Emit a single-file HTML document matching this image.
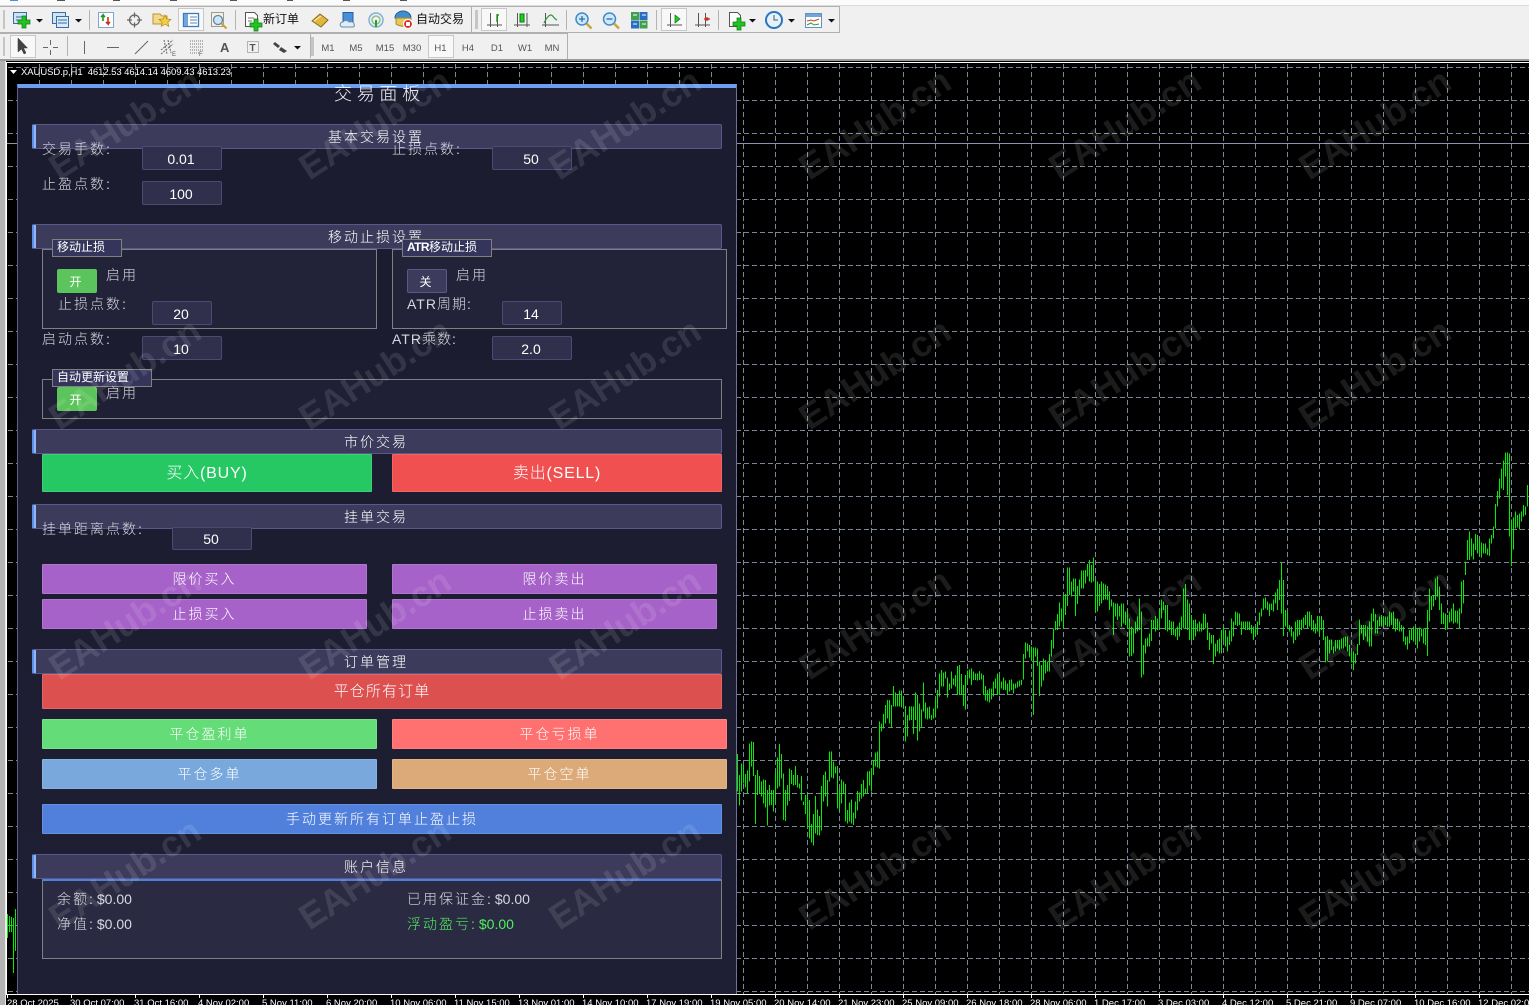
<!DOCTYPE html>
<html lang="zh-CN">
<head>
<meta charset="utf-8">
<title>MT4 交易面板</title>
<style>
html,body{margin:0;padding:0;background:#000}
body{position:relative;width:1529px;height:1005px;overflow:hidden;font-family:"Liberation Sans","Noto Sans CJK SC",sans-serif}
svg{position:absolute;left:0;top:0}
.a{position:absolute;box-sizing:border-box;white-space:nowrap}
#panel{left:17px;top:84px;width:720px;height:910px;background:linear-gradient(#1c1c30,#1e1e34);border-left:1px solid #5f6088;border-right:1px solid #6f70a0;border-top:4px solid #6d9ff0;overflow:visible}
.s{height:25px;left:32px;width:690px;background:#3d3b5c;border:1px solid #5a5888;border-left:2px solid #5b8fe8;box-shadow:inset 2px 0 #8fb5f5;border-radius:2px;color:#fff;font-size:14px;font-weight:300;letter-spacing:2px;text-align:center;line-height:24px;padding-right:3px}
.l{height:20px;line-height:21px;font-size:14px;font-weight:300;letter-spacing:2px;color:#d8d8e0}
.l span{letter-spacing:0;margin-left:2px}
.i{width:80px;height:24px;background:#302f4c;border:1px solid #4b4a72;border-radius:2px;color:#fff;font-size:14px;text-align:center;line-height:24px;padding-right:2px}
.g{border:1px solid #808080;background:#222238}
.c{height:18px;background:#35345a;border:1px solid #808080;color:#fff;font-size:12px;line-height:15px;padding-left:4px}
.c b{letter-spacing:-.6px}
.t{width:40px;height:24px;border-radius:2px;color:#fff;font-size:12px;text-align:center;line-height:27px;background:#5cc45c;padding-right:3px}
.b{color:#fff;font-size:14px;font-weight:300;letter-spacing:2px;text-align:center;border:1px solid rgba(255,255,255,.12);border-radius:1px}
.w{position:absolute;font:bold 36px "Liberation Sans",sans-serif;color:rgba(255,255,255,.11);transform:translate(-50%,-50%) rotate(-33deg);white-space:nowrap;pointer-events:none}
</style>
</head>
<body>
<!-- chart -->
<svg width="1529" height="1005" viewBox="0 0 1529 1005">
<rect x="0" y="0" width="1529" height="1005" fill="#000"/>
<g stroke="#7a8899" stroke-width="1" stroke-dasharray="5 3" shape-rendering="crispEdges" fill="none">
<path d="M8 67.5H1529M8 100.5H1529M8 133.5H1529M8 166.5H1529M8 199.5H1529M8 232.5H1529M8 265.5H1529M8 298.5H1529M8 331.5H1529M8 364.5H1529M8 397.5H1529M8 430.5H1529M8 463.5H1529M8 496.5H1529M8 529.5H1529M8 562.5H1529M8 595.5H1529M8 628.5H1529M8 661.5H1529M8 694.5H1529M8 727.5H1529M8 760.5H1529M8 793.5H1529M8 826.5H1529M8 859.5H1529M8 892.5H1529M8 925.5H1529M8 958.5H1529M8 991.5H1529"/>
<path d="M39.5 64V994M71.5 64V994M103.5 64V994M135.5 64V994M167.5 64V994M199.5 64V994M231.5 64V994M263.5 64V994M295.5 64V994M327.5 64V994M359.5 64V994M391.5 64V994M423.5 64V994M455.5 64V994M487.5 64V994M519.5 64V994M551.5 64V994M583.5 64V994M615.5 64V994M647.5 64V994M679.5 64V994M711.5 64V994M743.5 64V994M775.5 64V994M807.5 64V994M839.5 64V994M871.5 64V994M903.5 64V994M935.5 64V994M967.5 64V994M999.5 64V994M1031.5 64V994M1063.5 64V994M1095.5 64V994M1127.5 64V994M1159.5 64V994M1191.5 64V994M1223.5 64V994M1255.5 64V994M1287.5 64V994M1319.5 64V994M1351.5 64V994M1383.5 64V994M1415.5 64V994M1447.5 64V994M1479.5 64V994M1511.5 64V994"/>
</g>
<path d="M7 143.5H1529" stroke="#8a93a8" stroke-width="1" shape-rendering="crispEdges"/>
<g fill="none" stroke="#00ee00" stroke-width="3" shape-rendering="crispEdges" transform="translate(735.17 640) scale(.33333)">
<path d="M7 342V455M13 405V497M19 370V455M25 375V430M31 402V442M37 392V460M43 310V425M49 305V380M55 306V408M61 405V552M67 390V465M73 408V462M79 425V470M85 418V490M91 420V503M97 450V557M103 435V497M109 450V495M115 450V515M121 398V490M127 352V445M133 312V440M139 342V415M145 400V540M151 450V543M157 435V497M163 385V483M169 390V432M175 405V437M181 378V435M187 405V442M193 430V445M199 408V482M205 485V495M211 465V522M217 460V560M223 480V595M229 552V608M235 522V617M241 468V580M247 508V585M253 528V587M259 438V572M265 405V485M271 395V470M277 420V500M283 335V425M289 335V412M295 365V415M301 380V400M307 378V505M313 447V510M319 418V490M325 425V462M331 432V545M337 510V550M343 488V545M349 478V550M355 518V555M361 485V535M367 453V512M373 458V485M379 432V475M385 420V470M391 445V462M397 395V460M403 393V436M409 385V455M415 360V405M421 338V380M427 335V382M433 245V385M439 250V275M445 222V265M451 195V250M457 180V235M463 180V250M469 195V262M475 138V200M481 158V200M487 165V200M493 152V200M499 152V202M505 170V200M511 198V305M517 225V290M523 200V242M529 200V240M535 200V282M541 157V240M547 165V302M553 190V275M559 208V262M565 127V215M571 188V235M577 202V238M583 200V235M589 225V240M595 205V235M601 177V232M607 150V205M613 100V170M619 90V140M625 98V140M631 95V115M637 112V172M643 130V150M649 95V145M655 115V135M661 105V140M667 78V165M673 75V165M679 102V165M685 135V198M691 105V208M697 92V135M703 88V115M709 85V135M715 95V120M721 100V120M727 100V122M733 93V120M739 100V118M745 105V165M751 138V182M757 150V185M763 145V188M769 145V178M775 125V170M781 115V145M787 100V165M793 102V165M799 125V145M805 113V150M811 122V150M817 130V165M823 120V155M829 118V150M835 130V160M841 130V145M847 125V143M853 122V140M859 120V135M865 42V118M871 7V55M877 10V35M883 15V52M889 20V62M895 22V225M901 22V50M907 25V78M913 65V168M919 75V140M925 55V122M931 60V100M937 65V95M943 42V95M949 0V50"/>
</g>
<g fill="none" stroke="#00ee00" stroke-width="3" shape-rendering="crispEdges" transform="translate(1000.5 440) scale(.33333)">
<path d="M159 565V625M165 543V570M171 522V570M177 488V560M183 505V545M189 465V565M195 462V525M201 382V498M207 382V465M213 425V470M219 415V455M225 415V528M231 438V492M237 418V468M243 392V445"/>
</g>
<g fill="none" stroke="#00ee00" stroke-width="3" shape-rendering="crispEdges" transform="translate(1002.5 440) scale(.33333)">
<path d="M243 392V445M249 390V430M255 372V410M261 360V425M267 375V428M273 352V425M279 418V515M285 425V515M291 432V498M297 425V490M303 430V480M309 433V478M315 438V480M321 455V510M327 478V500M333 488V585M339 490V530M345 490V540M351 498V530M357 490V560M363 490V550M369 515V555M375 510V565M381 535V650M387 560V648M393 565V640M399 545V580M405 530V575M411 475V570M417 515V712M423 615V703M429 595V640M435 592V620M441 580V620M447 540V603M453 540V565M459 528V575M465 535V570M471 508V570M477 478V535M483 485V510M489 495V570M495 495V575M501 540V570M507 545V585M513 545V585M519 565V590M525 560V600M531 548V590M537 530V570M543 445V565M549 432V565M555 478V570M561 490V600M567 525V600M573 540V600M579 538V590M585 550V575M591 545V575M597 550V575M603 520V570M609 522V565M615 548V600M621 578V630M627 585V610M633 585V672M639 610V650M645 600V635M651 595V640M657 570V640M663 560V600M669 570V620M675 590V635M681 572V615M687 535V605M693 545V590M699 515V555M705 518V558M711 520V555M717 545V585M723 545V565M729 545V570M735 545V570"/>
</g>
<g fill="none" stroke="#00ee00" stroke-width="3" shape-rendering="crispEdges" transform="translate(1004.5 440) scale(.33333)">
<path d="M735 545V570M741 555V580M747 560V600M753 560V590M759 545V585M765 518V555M771 505V530M777 475V510M783 472V505M789 485V510M795 490V528M801 490V510M807 478V515M813 458V490M819 445V510M825 420V480M831 368V520M837 420V588M843 510V560M849 512V565M855 555V575M861 560V590M867 575V610M873 545V600M879 540V590M885 540V585M891 538V570M897 532V565M903 525V555M909 515V565M915 515V560M921 525V570M927 540V575M933 550V580M939 528V575M945 530V585M951 528V570M957 540V600M963 590V668M969 588V665M975 600V640M981 598V630M987 620V640M993 600V635M999 600V625M1005 600V630M1011 595V625M1017 592V625M1023 590V620M1029 590V635M1035 615V650M1041 635V668M1047 635V690M1053 640V670M1059 612V645M1065 538V615M1071 555V580M1077 555V600M1083 555V590M1089 560V605M1095 545V620M1101 520V620M1107 505V545M1113 522V580M1119 540V580M1125 530V560M1131 525V560M1137 530V560M1143 530V555M1149 530V560M1155 515V560M1161 518V555M1167 515V565M1173 535V575M1179 535V570M1185 545V575M1191 555V575M1197 560V605M1203 590V615M1209 590V628M1215 570V610M1221 565V600M1227 560V605"/>
</g>
<g fill="none" stroke="#00ee00" stroke-width="3" shape-rendering="crispEdges" transform="translate(1006.5 440) scale(.33333)">
<path d="M1227 560V605M1233 565V625M1239 562V605M1245 565V590M1251 565V610M1257 565V615M1263 510V648M1269 445V545M1275 468V510M1281 465V500M1287 415V480M1293 410V470M1299 440V510M1305 490V552M1311 518V552M1317 520V570M1323 525V568M1329 515V548M1335 505V545M1341 490V550M1347 512V548M1353 512V550M1359 505V565M1365 425V520M1371 420V490M1377 365V405M1383 300V360M1389 275V360M1395 295V350M1401 310V358M1407 282V330M1413 285V340M1419 295V340M1425 308V352M1431 310V340M1437 310V340M1443 325V345M1449 295V348M1455 285V310M1461 260V295M1467 192V265M1473 153V200M1479 115V175M1485 85V145M1491 62V150M1497 38V110M1503 38V165M1509 40V290M1515 238V378M1521 232V328M1527 215V265M1533 225V262M1539 220V268M1545 215V245M1551 195V230M1557 200V225M1563 135V200"/>
</g>
<path d="M7.5 914V938M9.5 916V932M11.5 917V932M13.5 918V973M15.5 909V951" stroke="#00ee00" stroke-width="1" shape-rendering="crispEdges"/>
<!-- axis frame -->
<path d="M6.5 63V994M6 994.5H1529M6 62.5H1529" stroke="#fff" stroke-width="1" shape-rendering="crispEdges"/>
<path d="M7.5 995v3M71.5 995v3M135.5 995v3M199.5 995v3M263.5 995v3M327.5 995v3M391.5 995v3M455.5 995v3M519.5 995v3M583.5 995v3M647.5 995v3M711.5 995v3M775.5 995v3M839.5 995v3M903.5 995v3M967.5 995v3M1031.5 995v3M1095.5 995v3M1159.5 995v3M1223.5 995v3M1287.5 995v3M1351.5 995v3M1415.5 995v3M1479.5 995v3" stroke="#fff" shape-rendering="crispEdges"/>
<g fill="#fff" font-family="Liberation Sans" font-size="9.5">
<text x="7" y="1006">28 Oct 2025</text><text x="70" y="1006">30 Oct 07:00</text><text x="134" y="1006">31 Oct 16:00</text><text x="198" y="1006">4 Nov 02:00</text><text x="262" y="1006">5 Nov 11:00</text><text x="326" y="1006">6 Nov 20:00</text><text x="390" y="1006">10 Nov 06:00</text><text x="454" y="1006">11 Nov 15:00</text><text x="518" y="1006">13 Nov 01:00</text><text x="582" y="1006">14 Nov 10:00</text><text x="646" y="1006">17 Nov 19:00</text><text x="710" y="1006">19 Nov 05:00</text><text x="774" y="1006">20 Nov 14:00</text><text x="838" y="1006">21 Nov 23:00</text><text x="902" y="1006">25 Nov 09:00</text><text x="966" y="1006">26 Nov 18:00</text><text x="1030" y="1006">28 Nov 06:00</text><text x="1094" y="1006">1 Dec 17:00</text><text x="1158" y="1006">3 Dec 03:00</text><text x="1222" y="1006">4 Dec 12:00</text><text x="1286" y="1006">5 Dec 21:00</text><text x="1350" y="1006">9 Dec 07:00</text><text x="1414" y="1006">10 Dec 16:00</text><text x="1478" y="1006">12 Dec 02:00</text>
</g>
<path d="M10 70h7l-3.5 4z" fill="#fff"/>
<text x="21" y="75" fill="#fff" font-family="Liberation Sans" font-size="9.5" textLength="210" lengthAdjust="spacing" xml:space="preserve">XAUUSD.p,H1  4612.53 4614.14 4609.43 4613.23</text>
</svg>

<!-- panel -->
<div class="a" id="panel"></div>
<div class="a" style="left:334px;top:83px;height:22px;line-height:22px;font-size:18px;font-weight:300;letter-spacing:4.7px;color:#f4f4fa">交易面板</div>

<div class="a s" style="top:124px">基本交易设置</div>
<div class="a l" style="left:42px;top:139px">交易手数:</div>
<div class="a i" style="left:142px;top:146px">0.01</div>
<div class="a l" style="left:392px;top:139px">止损点数:</div>
<div class="a i" style="left:492px;top:146px">50</div>
<div class="a l" style="left:42px;top:174px">止盈点数:</div>
<div class="a i" style="left:142px;top:181px">100</div>

<div class="a s" style="top:224px">移动止损设置</div>
<div class="a g" style="left:42px;top:249px;width:335px;height:80px"></div>
<div class="a c" style="left:52px;top:239px;width:70px">移动止损</div>
<div class="a t" style="left:57px;top:269px">开</div>
<div class="a l" style="left:106px;top:265px">启用</div>
<div class="a l" style="left:58px;top:294px">止损点数:</div>
<div class="a i" style="left:152px;top:301px;width:60px">20</div>

<div class="a g" style="left:392px;top:249px;width:335px;height:80px"></div>
<div class="a c" style="left:402px;top:239px;width:90px"><b>ATR</b>移动止损</div>
<div class="a t" style="left:407px;top:269px;background:#3d3b5c;border:1px solid #5a5888;line-height:25px">关</div>
<div class="a l" style="left:456px;top:265px">启用</div>
<div class="a l" style="left:407px;top:294px;letter-spacing:1px">ATR周期:</div>
<div class="a i" style="left:502px;top:301px;width:60px">14</div>

<div class="a l" style="left:42px;top:329px">启动点数:</div>
<div class="a i" style="left:142px;top:336px">10</div>
<div class="a l" style="left:392px;top:329px;letter-spacing:1px">ATR乘数:</div>
<div class="a i" style="left:492px;top:336px">2.0</div>

<div class="a g" style="left:42px;top:379px;width:680px;height:40px;background:#1f1f35"></div>
<div class="a c" style="left:52px;top:369px;width:100px">自动更新设置</div>
<div class="a t" style="left:57px;top:387px">开</div>
<div class="a l" style="left:106px;top:383px">启用</div>

<div class="a s" style="top:429px">市价交易</div>
<div class="a b" style="left:42px;top:454px;width:330px;height:38px;line-height:37px;background:#26c864;font-size:16px;letter-spacing:.8px">买入(BUY)</div>
<div class="a b" style="left:392px;top:454px;width:330px;height:38px;line-height:37px;background:#f05050;font-size:16px;letter-spacing:.8px">卖出(SELL)</div>

<div class="a s" style="top:504px">挂单交易</div>
<div class="a l" style="left:42px;top:519px">挂单距离点数:</div>
<div class="a i" style="left:172px;top:527px;height:23px;line-height:23px">50</div>
<div class="a b" style="left:42px;top:564px;width:325px;height:30px;line-height:29px;background:#a662c8">限价买入</div>
<div class="a b" style="left:392px;top:564px;width:325px;height:30px;line-height:29px;background:#a662c8">限价卖出</div>
<div class="a b" style="left:42px;top:599px;width:325px;height:30px;line-height:29px;background:#a662c8">止损买入</div>
<div class="a b" style="left:392px;top:599px;width:325px;height:30px;line-height:29px;background:#a662c8">止损卖出</div>

<div class="a s" style="top:649px">订单管理</div>
<div class="a b" style="left:42px;top:674px;width:680px;height:35px;line-height:33px;background:#dc5050;font-size:15px;letter-spacing:1.1px">平仓所有订单</div>
<div class="a b" style="left:42px;top:719px;width:335px;height:30px;line-height:29px;background:#64dc78">平仓盈利单</div>
<div class="a b" style="left:392px;top:719px;width:335px;height:30px;line-height:29px;background:#ff7070">平仓亏损单</div>
<div class="a b" style="left:42px;top:759px;width:335px;height:30px;line-height:29px;background:#78a8dc">平仓多单</div>
<div class="a b" style="left:392px;top:759px;width:335px;height:30px;line-height:29px;background:#dcaa78">平仓空单</div>
<div class="a b" style="left:42px;top:804px;width:680px;height:30px;line-height:29px;background:#5080dc">手动更新所有订单止盈止损</div>

<div class="a s" style="top:854px">账户信息</div>
<div class="a g" style="left:42px;top:879px;width:680px;height:80px;background:#2a2a42;border-top:2px solid #5080dc"></div>
<div class="a l" style="left:57px;top:889px">余额:<span>$0.00</span></div>
<div class="a l" style="left:57px;top:914px">净值:<span>$0.00</span></div>
<div class="a l" style="left:407px;top:889px">已用保证金:<span>$0.00</span></div>
<div class="a l" style="left:407px;top:914px;color:#50f060">浮动盈亏:<span>$0.00</span></div>

<!-- watermark -->
<div class="w" style="left:125px;top:124px">EAHub.cn</div><div class="w" style="left:375px;top:124px">EAHub.cn</div><div class="w" style="left:625px;top:124px">EAHub.cn</div><div class="w" style="left:875px;top:124px">EAHub.cn</div><div class="w" style="left:1125px;top:124px">EAHub.cn</div><div class="w" style="left:1375px;top:124px">EAHub.cn</div>
<div class="w" style="left:125px;top:374px">EAHub.cn</div><div class="w" style="left:375px;top:374px">EAHub.cn</div><div class="w" style="left:625px;top:374px">EAHub.cn</div><div class="w" style="left:875px;top:374px">EAHub.cn</div><div class="w" style="left:1125px;top:374px">EAHub.cn</div><div class="w" style="left:1375px;top:374px">EAHub.cn</div>
<div class="w" style="left:125px;top:624px">EAHub.cn</div><div class="w" style="left:375px;top:624px">EAHub.cn</div><div class="w" style="left:625px;top:624px">EAHub.cn</div><div class="w" style="left:875px;top:624px">EAHub.cn</div><div class="w" style="left:1125px;top:624px">EAHub.cn</div><div class="w" style="left:1375px;top:624px">EAHub.cn</div>
<div class="w" style="left:125px;top:874px">EAHub.cn</div><div class="w" style="left:375px;top:874px">EAHub.cn</div><div class="w" style="left:625px;top:874px">EAHub.cn</div><div class="w" style="left:875px;top:874px">EAHub.cn</div><div class="w" style="left:1125px;top:874px">EAHub.cn</div><div class="w" style="left:1375px;top:874px">EAHub.cn</div>

<!-- left chrome -->
<div class="a" style="left:0;top:60px;width:6px;height:945px;background:#b4b4b4;border-right:1px solid #e8e8e8"></div>

<!-- toolbars -->
<svg width="1529" height="62" viewBox="0 0 1529 62">
<defs>
<g id="plus"><path d="M4 0h4v4h4v4H8v4H4V8H0V4h4z" fill="#22c322" stroke="#0d7a0d" stroke-width=".7"/></g>
<path id="dd" d="M0 0h7l-3.5 3.5z" fill="#111"/>
</defs>
<rect width="1529" height="61" fill="#f0f0f0"/>
<rect width="1529" height="5" fill="#fbfbfb"/>
<path d="M10 .5h8" stroke="#4a8fd8"/>
<path d="M57 .5h8M113 .5h7M170 .5h7M230 .5h7M287 .5h6M343 .5h7M400 .5h7" stroke="#555"/>
<path d="M0 5.5H1529" stroke="#dcdcdc" shape-rendering="crispEdges"/>
<path d="M0 60H1529" stroke="#9a9a9a" stroke-width="2"/>
<g fill="none" stroke="#b0b0b0" shape-rendering="crispEdges">
<path d="M0 6.5H839.5V32.5H0"/>
<path d="M0 33.5H567.5V59"/>
<path d="M471.5 7V32M310.5 34V58"/>
</g>
<g fill="#a8a8a8"><rect x="3" y="10" width="2" height="19" opacity=".6"/><rect x="3" y="37" width="2" height="19" opacity=".6"/><rect x="475" y="10" width="3" height="19" opacity=".6"/><rect x="311" y="37" width="3" height="19" opacity=".6"/></g>
<g fill="none" stroke="#b4b4b4" shape-rendering="crispEdges">
<path d="M89.5 10V30M235.5 10V30M566.5 10V30M656.5 10V30M718.5 10V30M67.5 36V56"/>
</g>
<!-- pressed -->
<g fill="#f8f8f8" stroke="#c8c8c8" shape-rendering="crispEdges">
<rect x="178.5" y="8.5" width="25" height="22"/><rect x="481.5" y="8.5" width="25" height="22"/><rect x="661.5" y="8.5" width="25" height="22"/><rect x="10.5" y="35.5" width="25" height="22"/><rect x="428.5" y="35.5" width="25" height="22"/>
</g>
<!-- row 1 left -->
<rect x="13.5" y="12.5" width="13" height="11" fill="#cfe3f5" stroke="#3a6ea5"/><path d="M16 17h8M16 20h8" stroke="#3a6ea5"/><use href="#plus" x="18" y="16"/><use href="#dd" x="36" y="19"/>
<rect x="52.5" y="12.5" width="13" height="11" fill="#cfe3f5" stroke="#3a6ea5"/><rect x="56.5" y="16.5" width="12" height="11" fill="#dcebf8" stroke="#3a6ea5"/><path d="M58 20h9M58 23h9" stroke="#3a6ea5"/><use href="#dd" x="75" y="19"/>
<rect x="98.5" y="12.5" width="15" height="15" fill="#fff" stroke="#7fa8cf"/><path d="M103 21v-6l-2 2m2-2l2 2" stroke="#1a9a1a" stroke-width="1.6" fill="none"/><path d="M108 17v7l-2-2m2 2l2-2" stroke="#d03020" stroke-width="1.6" fill="none"/>
<circle cx="134.5" cy="20" r="5" fill="none" stroke="#666" stroke-width="1.3"/><path d="M134.5 12.5v5M134.5 22.5v5M127 20h5M137 20h5" stroke="#666" stroke-width="1.3"/>
<path d="M153 14h7l2 2h5v8h-14z" fill="#f3d98a" stroke="#b8943a"/><path d="M165 15l1.8 4 4.2.4-3.2 2.8 1 4.2-3.8-2.3-3.8 2.3 1-4.2-3.2-2.8 4.2-.4z" fill="#f5cf3f" stroke="#b08a20" stroke-width=".7"/>
<rect x="183.5" y="13.5" width="15" height="13" fill="#fff" stroke="#3a7ac0" stroke-width="1.3"/><rect x="184" y="14" width="4" height="12" fill="#6fa6dc"/><path d="M190 17h7M190 20h7M190 23h7" stroke="#5588bb"/>
<rect x="211.5" y="12.5" width="12" height="14" fill="#f4f0e4" stroke="#a09a88"/><circle cx="218" cy="20" r="4.5" fill="#cfe5f7" stroke="#5b86ad" stroke-width="1.3"/><path d="M221.5 23.5l5 5" stroke="#c9a23a" stroke-width="2"/>
<path d="M245.5 12.5h9l3 3v11h-12z" fill="#fff" stroke="#555"/><path d="M248 18h6M248 21h4" stroke="#777"/><use href="#plus" x="250" y="19"/>
<text x="263" y="23" font-family="Noto Sans CJK SC" font-size="12" fill="#111">新订单</text>
<path d="M312 21l8-7 8 6-7 7z" fill="#e0b640" stroke="#8a6a1a"/><path d="M314 21l7-5" stroke="#fff2b8"/>
<rect x="343" y="12.5" width="10" height="10" fill="#4a8fd8" stroke="#1f5fa8"/><path d="M342 27c-3-1-2-5 1-5 1-2 5-2 6 0 3-1 6 1 5 3 1 1 0 2-1 2z" fill="#e0ecf6" stroke="#6a8bb0"/>
<circle cx="376" cy="20" r="7" fill="none" stroke="#7fb3d8" stroke-width="1.5"/><circle cx="376" cy="20" r="4" fill="none" stroke="#8cc08c" stroke-width="1.5"/><path d="M376 20v7" stroke="#2a9a3a" stroke-width="2"/>
<path d="M395 18c0-5 5-7 8-7s8 2 8 7l-8 3z" fill="#3f8fd0" stroke="#215f95"/><path d="M396 18h15v7c-2 2-11 2-15-1z" fill="#e8c85a" stroke="#a8882a"/><circle cx="408" cy="24" r="4.5" fill="#e02020" stroke="#fff" stroke-width="1.2"/><rect x="406" y="22" width="4" height="4" fill="#fff"/>
<text x="416" y="23" font-family="Noto Sans CJK SC" font-size="12" fill="#111">自动交易</text>
<!-- row 1 right -->
<path d="M490.5 13v14M497.5 14v13M487 25h15" stroke="#555" fill="none"/><path d="M497 22v-7h2" stroke="#1a9a1a" stroke-width="1.4" fill="none"/>
<path d="M517.5 13v14M527 13v14M514 25h16" stroke="#555" fill="none"/><rect x="520" y="14" width="4" height="8" fill="#22cc22" stroke="#0a7a0a"/>
<path d="M545.5 13v14M542 25h17" stroke="#555" fill="none"/><path d="M544 23c3-6 5-8 7-8s3 4 6 5" stroke="#2a9a3a" stroke-width="1.2" fill="none"/>
<circle cx="582" cy="19" r="6" fill="#cfe7fb" stroke="#3f8cc8" stroke-width="1.5"/><path d="M586.5 23.5l5 5" stroke="#c9a23a" stroke-width="2.4"/><path d="M579 19h6M582 16v6" stroke="#2a6ea8" stroke-width="1.3"/>
<circle cx="609.5" cy="19" r="6" fill="#cfe7fb" stroke="#3f8cc8" stroke-width="1.5"/><path d="M614 23.5l5 5" stroke="#c9a23a" stroke-width="2.4"/><path d="M606.5 19h6" stroke="#2a6ea8" stroke-width="1.3"/>
<rect x="631" y="12" width="8" height="8" fill="#3fa050"/><rect x="639.5" y="12" width="8" height="8" fill="#2a6fc0"/><rect x="631" y="20.5" width="8" height="8" fill="#2a6fc0"/><rect x="639.5" y="20.5" width="8" height="8" fill="#3fa050"/><path d="M633 15h4M642 15h4M633 24h4M642 24h4" stroke="#fff"/>
<path d="M670.5 13v14M667 25h15" stroke="#555" fill="none"/><path d="M675 15l5 4-5 4z" fill="#22cc22" stroke="#0a7a0a" stroke-width=".7"/>
<path d="M698.5 13v14M705.5 13v14M695 25h15" stroke="#555" fill="none"/><path d="M704 19h6" stroke="#d03020" stroke-width="1.3"/><circle cx="707" cy="19" r="1.8" fill="#d03020"/>
<path d="M729.5 12.5h8l3 3v11h-11z" fill="#fff" stroke="#555"/><use href="#plus" x="733" y="18"/><use href="#dd" x="749" y="19"/>
<circle cx="774" cy="20" r="8" fill="#e6f2fb" stroke="#2a75c0" stroke-width="2"/><path d="M774 15v5h4" stroke="#555" fill="none"/><use href="#dd" x="788" y="19"/>
<rect x="805.5" y="13.5" width="16" height="14" fill="#fff" stroke="#6a8fb5"/><rect x="806" y="14" width="15" height="3" fill="#6fa6dc"/><path d="M807 21l4-1 3 1 5-2" stroke="#d04020" fill="none"/><path d="M807 25l4-2 3 2 5-1" stroke="#2a9a3a" fill="none"/><use href="#dd" x="828" y="19"/>
<!-- row 2 -->
<path d="M18 38v14l3.5-3 2.5 5 2-1-2.5-5h4z" fill="#444" stroke="#333" stroke-width=".5"/>
<path d="M50.5 40v5M50.5 50v5M43 47.5h5M53 47.5h5" stroke="#666"/>
<path d="M84.5 41v13M107 47.5h12M135 54l13-13" stroke="#666" fill="none"/>
<path d="M161 50l12-10M161 54l12-10M164 40l3 14M168 40l3 13" stroke="#666" fill="none" stroke-dasharray="2 1"/><text x="172" y="56" font-family="Liberation Sans" font-size="6" fill="#555">E</text>
<path d="M190 41h13M190 44h13M190 47h13M190 50h13M190 53h9" stroke="#777" stroke-dasharray="1 1"/><text x="199" y="56" font-family="Liberation Sans" font-size="6" fill="#555">F</text>
<text x="220" y="52" font-family="Liberation Sans" font-size="13" font-weight="bold" fill="#555">A</text>
<rect x="247.5" y="41.5" width="11" height="11" fill="none" stroke="#777" stroke-dasharray="1 1"/><text x="249.5" y="51" font-family="Liberation Sans" font-size="10" font-weight="bold" fill="#555">T</text>
<path d="M275 42l5 4-2 2-5-4zM281 47l6 4-3 2-5-3z" fill="#444"/><use href="#dd" x="294" y="46"/>
<g font-family="Liberation Sans" font-size="9.5" fill="#555" text-anchor="middle">
<text x="328" y="51">M1</text><text x="356" y="51">M5</text><text x="385" y="51">M15</text><text x="412" y="51">M30</text><text x="440.5" y="51">H1</text><text x="468" y="51">H4</text><text x="497" y="51">D1</text><text x="525" y="51">W1</text><text x="552" y="51">MN</text>
</g>
</svg>
</body>
</html>
